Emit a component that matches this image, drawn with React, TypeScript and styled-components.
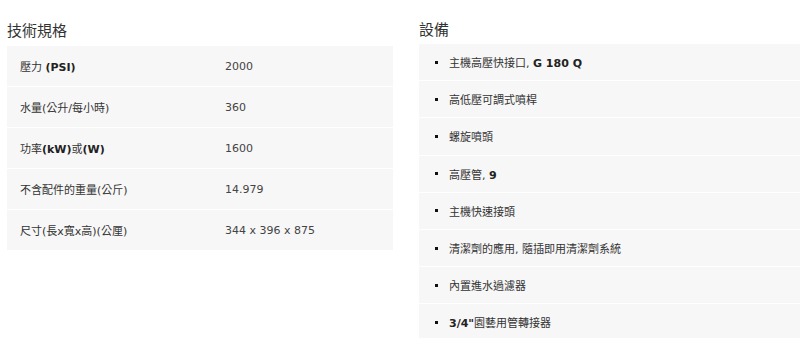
import React from 'react';
import styled, { createGlobalStyle } from 'styled-components';

const GlobalStyle = createGlobalStyle`
  html, body {
    margin: 0;
    padding: 0;
    background: #fff;
    overflow: hidden;
  }
  body {
    font-family: "DejaVu Sans", "Noto Sans CJK TC", sans-serif;
    color: #333;
  }
`;

const ScPage = styled.div`
  display: grid;
  grid-template-columns: 386px 386px;
  column-gap: 26px;
  padding-left: 7px;
  width: 805px;
`;

const ScSection = styled.section`
  display: flex;
  flex-direction: column;
`;

const ScHeading = styled.h2<{ $height: number }>`
  margin: 0;
  height: ${p => p.$height}px;
  display: flex;
  align-items: center;
  padding-top: 12px;
  box-sizing: border-box;
  font-family: "Noto Sans CJK TC", sans-serif;
  font-size: 15px;
  font-weight: 400;
  color: #333;
`;

const ScTable = styled.div`
  display: flex;
  flex-direction: column;
  gap: 1px;
`;

const ScSpecRow = styled.div`
  display: grid;
  grid-template-columns: 205px 1fr;
  align-items: center;
  height: 40px;
  padding-left: 13px;
  background: #f7f7f7;
  font-size: 11px;
`;

const ScLabel = styled.span`
  color: #333;
`;

const ScValue = styled.span`
  color: #444;
`;

const ScBold = styled.b`
  font-weight: 600;
  color: #222;
`;

const ScList = styled.ul`
  margin: 0;
  padding: 0;
  list-style: none;
  display: flex;
  flex-direction: column;
  gap: 1px;
`;

const ScItem = styled.li`
  display: flex;
  align-items: center;
  gap: 11px;
  height: 36.2px;
  padding-left: 16px;
  background: #f7f7f7;
  font-size: 11px;
  color: #333;

  &::before {
    content: '';
    width: 3px;
    height: 3px;
    background: #111;
    flex: none;
  }
`;

const specs: [React.ReactNode, string][] = [
  [<>壓力 <ScBold>(PSI)</ScBold></>, '2000'],
  ['水量(公升/每小時)', '360'],
  [<>功率<ScBold>(kW)</ScBold>或<ScBold>(W)</ScBold></>, '1600'],
  ['不含配件的重量(公斤)', '14.979'],
  ['尺寸(長x寬x高)(公厘)', '344 x 396 x 875'],
];

const equipment: React.ReactNode[] = [
  <>主機高壓快接口, <ScBold>G 180 Q</ScBold></>,
  '高低壓可調式噴桿',
  '螺旋噴頭',
  <>高壓管, <ScBold>9</ScBold></>,
  '主機快速接頭',
  '清潔劑的應用, 隨插即用清潔劑系統',
  '內置進水過濾器',
  <><ScBold>3/4"</ScBold>園藝用管轉接器</>,
];

export default function App(): JSX.Element {
  return <>
    <GlobalStyle />
    <ScPage>
      <ScSection>
        <ScHeading $height={46}>技術規格</ScHeading>
        <ScTable>
          {specs.map(([label, value], i) => (
            <ScSpecRow key={i}>
              <ScLabel>{label}</ScLabel>
              <ScValue>{value}</ScValue>
            </ScSpecRow>
          ))}
        </ScTable>
      </ScSection>
      <ScSection>
        <ScHeading $height={44}>設備</ScHeading>
        <ScList>
          {equipment.map((item, i) => <ScItem key={i}><span>{item}</span></ScItem>)}
        </ScList>
      </ScSection>
    </ScPage>
  </>;
}
